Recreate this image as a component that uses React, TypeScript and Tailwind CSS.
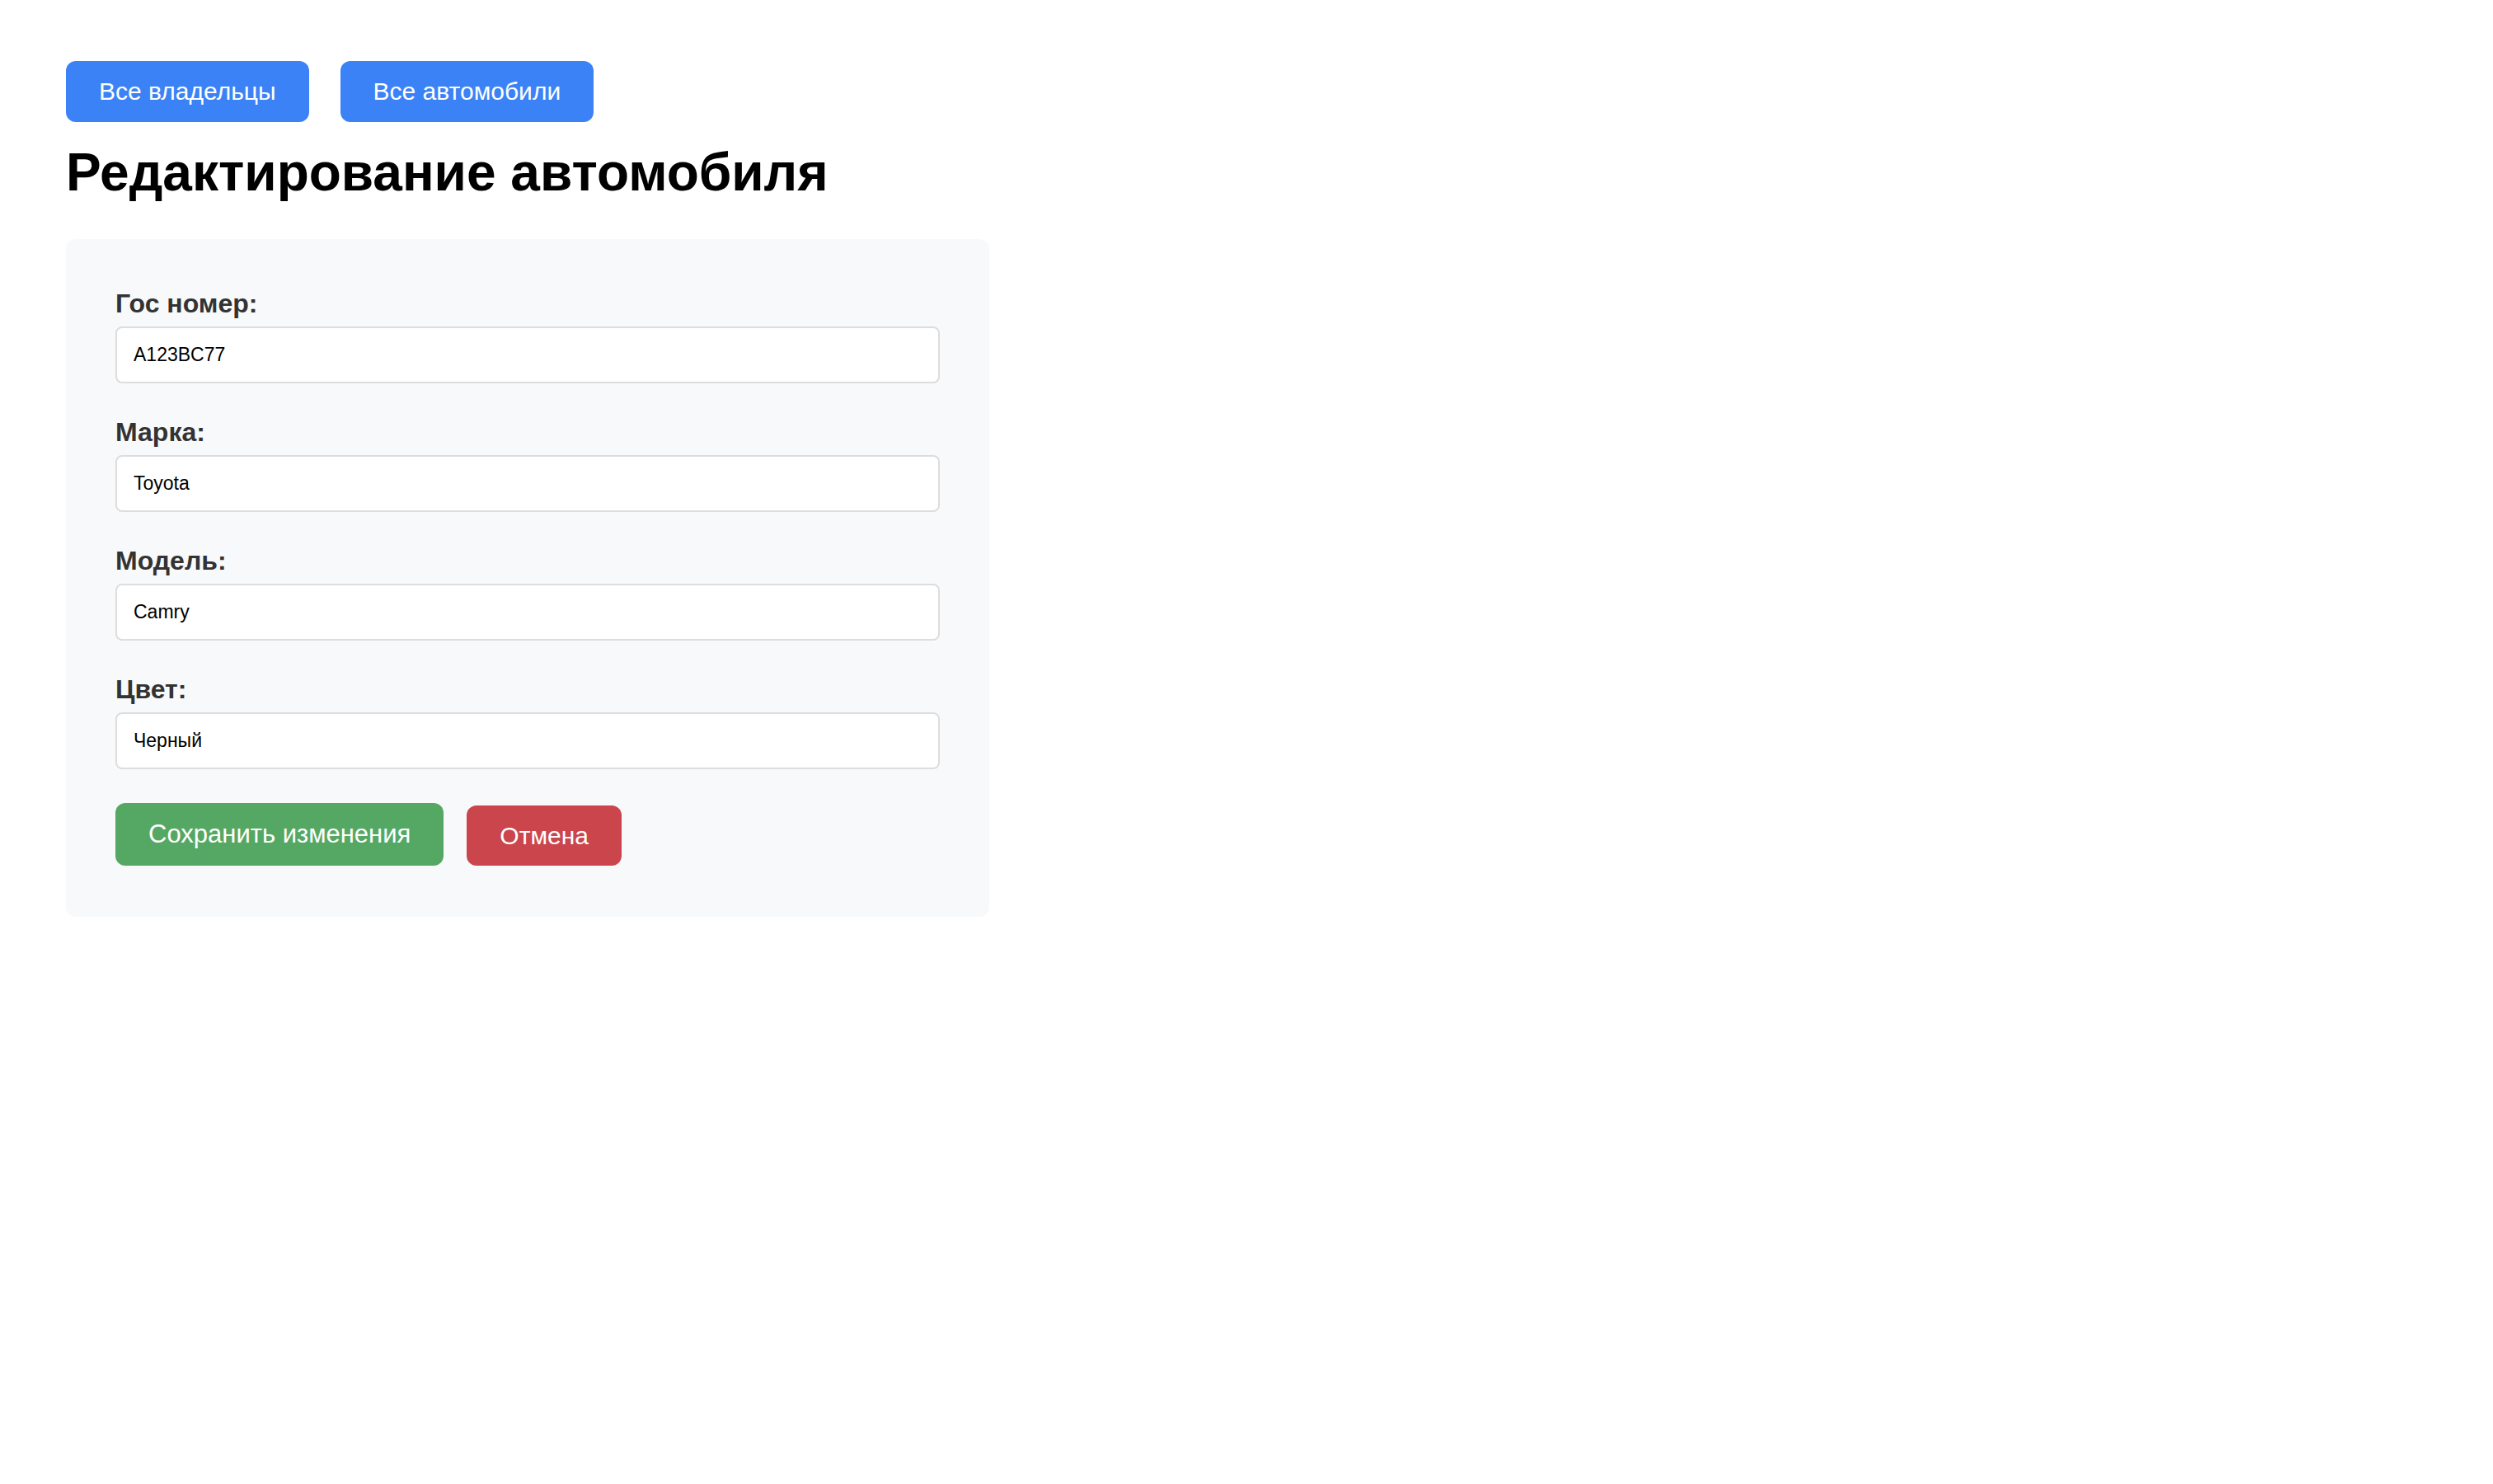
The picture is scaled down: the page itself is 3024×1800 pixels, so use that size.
import * as React from 'react'

const fields = [
  { label: 'Гос номер:', value: 'A123BC77' },
  { label: 'Марка:', value: 'Toyota' },
  { label: 'Модель:', value: 'Camry' },
  { label: 'Цвет:', value: 'Черный' },
]

function NavButton({ children }: { children: React.ReactNode }) {
  return (
    <button className="h-[74px] rounded-[12px] bg-[#3b82f6] px-[40px] text-[30px] leading-none text-white">
      {children}
    </button>
  )
}

export default function App() {
  return (
    <div
      className="min-h-screen bg-white px-[80px] pt-[74px]"
      style={{ fontFamily: '"Liberation Sans", Arial, sans-serif' }}
    >
      {/* Top navigation */}
      <div className="flex gap-[38px]">
        <NavButton>Все владельцы</NavButton>
        <NavButton>Все автомобили</NavButton>
      </div>

      <h1 className="mt-[24px] text-[64px] font-bold leading-[74px] text-black">Редактирование автомобиля</h1>

      {/* Edit form */}
      <form className="mt-[44px] w-[1120px] rounded-[12px] bg-[#f8f9fa] px-[60px] pt-[60px] pb-[62px]">
        {fields.map((f) => (
          <div key={f.label} className="mb-[41px] last:mb-[36px]">
            <label className="block text-[32px] font-bold leading-[37px] text-[#333333]">{f.label}</label>
            <input
              defaultValue={f.value}
              className="mt-[9px] block h-[69px] w-full rounded-[8px] border-2 border-[#dddddd] bg-white px-[20px] text-[23px] text-black outline-none"
            />
          </div>
        ))}
        <div className="flex items-end gap-[28px]">
          <button type="button" className="h-[76px] rounded-[12px] bg-[#55a863] px-[40px] text-[31px] text-white">
            Сохранить изменения
          </button>
          <button type="button" className="h-[73px] rounded-[12px] bg-[#cb454d] px-[40px] text-[30px] text-white">
            Отмена
          </button>
        </div>
      </form>
    </div>
  )
}
